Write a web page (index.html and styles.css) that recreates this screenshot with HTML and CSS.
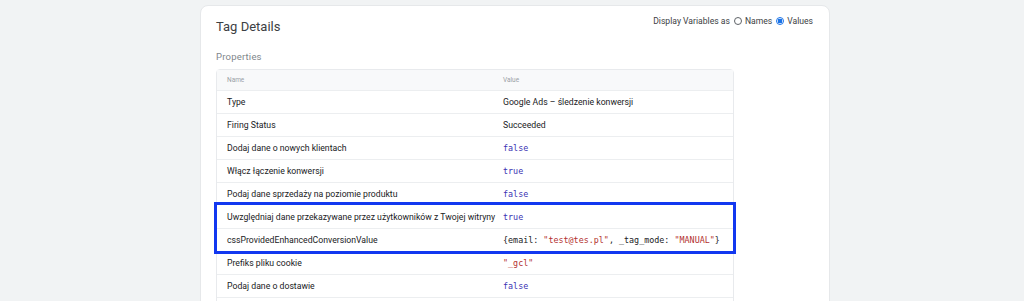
FILE: index.html
```html
<!DOCTYPE html>
<html lang="pl">
<head>
    <meta charset="UTF-8">
    <link rel="stylesheet" href="styles.css">
</head>
<body>
    <div class="card">
        <div class="card-head">
            <h2>Tag Details</h2>
            <div class="display-as">
                Display Variables as
                <span class="radio"></span> Names
                <span class="radio checked"></span> Values
            </div>
        </div>

        <h3>Properties</h3>

        <div class="props">
            <div class="row head">
                <div>Name</div>
                <div>Value</div>
            </div>
            <div class="row"><div>Type</div><div>Google Ads – śledzenie konwersji</div></div>
            <div class="row"><div>Firing Status</div><div>Succeeded</div></div>
            <div class="row"><div>Dodaj dane o nowych klientach</div><div class="code kw">false</div></div>
            <div class="row"><div>Włącz łączenie konwersji</div><div class="code kw">true</div></div>
            <div class="row"><div>Podaj dane sprzedaży na poziomie produktu</div><div class="code kw">false</div></div>
            <div class="highlight">
                <div class="row"><div>Uwzględniaj dane przekazywane przez użytkowników z Twojej witryny</div><div class="code kw">true</div></div>
                <div class="row"><div>cssProvidedEnhancedConversionValue</div><div class="code">{email: <span class="str">"test@tes.pl"</span>, _tag_mode: <span class="str">"MANUAL"</span>}</div></div>
            </div>
            <div class="row"><div>Prefiks pliku cookie</div><div class="code str">"_gcl"</div></div>
            <div class="row"><div>Podaj dane o dostawie</div><div class="code kw">false</div></div>
            <div class="row"><div></div><div></div></div>
        </div>
    </div>
</body>
</html>
```

FILE: styles.css
```css
body {
    margin: 0;
    background: #f1f3f4;
    font-family: Roboto, "Noto Sans", sans-serif;
    color: #202124;
    height: 301px;
    overflow: hidden;
}

.card {
    margin: 5px 0 0 200px;
    width: 630px;
    background: #fff;
    border-radius: 8px;
    border: 1px solid #e6e8ea;
    box-sizing: border-box;
    padding: 10px 15px 40px 15px;
    min-height: 400px;
}

.card-head {
    display: flex;
    justify-content: space-between;
    align-items: flex-start;
}

h2 {
    margin: 3px 0 0 0;
    font-size: 13px;
    font-weight: 400;
    color: #3c4043;
}

.display-as {
    display: flex;
    align-items: center;
    gap: 3px;
    font-size: 8.6px;
    color: #3c4043;
    margin: 0 1px 0 0;
}

.radio {
    width: 8px;
    height: 8px;
    border: 1px solid #5f6368;
    border-radius: 50%;
    box-sizing: border-box;
    display: inline-block;
    margin-left: 1px;
}

.radio.checked {
    border-color: #1a73e8;
    background: radial-gradient(circle, #1a73e8 0 2.2px, #fff 2.6px);
}

h3 {
    margin: 17px 0 7px 0;
    font-size: 9.5px;
    font-weight: 400;
    color: #80868b;
    letter-spacing: 0.2px;
}

.props {
    width: 518px;
    border: 1px solid #e8eaed;
    border-radius: 4px;
    box-sizing: border-box;
}

.row {
    display: grid;
    grid-template-columns: 276px 1fr;
    height: 22px;
    align-items: center;
    border-top: 1px solid #eceef0;
    font-size: 8.7px;
    color: #202124;
}

.row > div {
    padding-left: 10px;
    white-space: nowrap;
}

.row.head {
    border-top: none;
    height: 20px;
    background: #f8f9fa;
    font-size: 6.5px;
    color: #9aa0a6;
}

.highlight {
    outline: 3px solid #1238f0;
    position: relative;
}

.highlight .row:first-child {
    border-top-color: transparent;
}

.code {
    font-family: "DejaVu Sans Mono", "Liberation Mono", monospace;
    font-size: 8.4px;
    color: #202124;
}

.kw {
    color: #3b33b3;
}

.str {
    color: #b3312f;
}
```
